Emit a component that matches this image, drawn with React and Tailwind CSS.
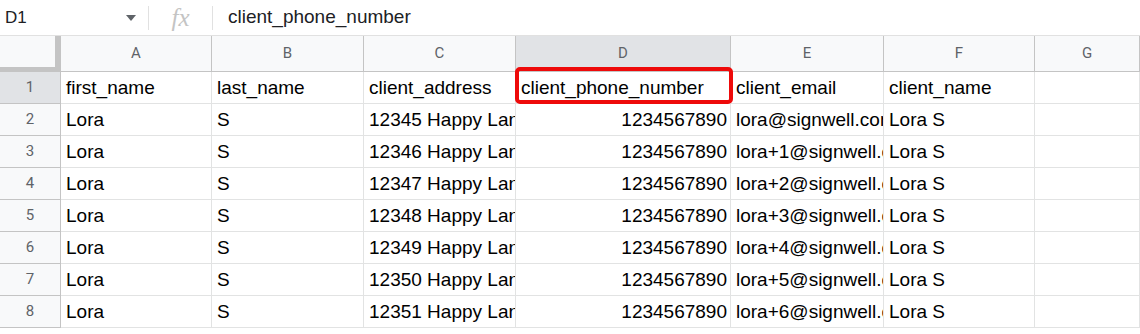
import React from 'react'

const cols = ['A', 'B', 'C', 'D', 'E', 'F', 'G']

const header = ['first_name', 'last_name', 'client_address', 'client_phone_number', 'client_email', 'client_name', '']

const rows = [0, 1, 2, 3, 4, 5, 6].map((i) => [
  'Lora',
  'S',
  `${12345 + i} Happy Lane`,
  '1234567890',
  i === 0 ? 'lora@signwell.com' : `lora+${i}@signwell.com`,
  'Lora S',
  '',
])

const gridCols = 'grid grid-cols-[61px_151px_152px_152px_215px_153px_151px_1fr]'

function FormulaBar() {
  return (
    <div className="flex h-[36px] items-center border-b border-[#e1e1e1] bg-white">
      <div className="flex w-[148px] items-center justify-between pl-[5px] pr-[12px]">
        <span className="text-[17px] text-[#202124]">D1</span>
        <svg width="10" height="6" viewBox="0 0 10 6" className="mt-[1px]">
          <path d="M0 0h10L5 6z" fill="#5f6368" />
        </svg>
      </div>
      <div className="h-[24px] w-px bg-[#e1e1e1]" />
      <div className="flex w-[63px] items-center justify-center">
        <span className="font-['Liberation_Serif',serif] text-[25px] italic leading-none text-[#c4c4c4]">fx</span>
      </div>
      <div className="h-[24px] w-px bg-[#e1e1e1]" />
      <span className="pl-[15px] text-[19px] text-[#202124]">client_phone_number</span>
    </div>
  )
}

export default function App() {
  return (
    <div className="h-[334px] w-[1140px] overflow-hidden bg-white font-['Liberation_Sans',Arial,sans-serif]">
      <FormulaBar />

      <div className={`${gridCols} h-[36px]`}>
        <div className="relative border-b-[5px] border-r-[6px] border-[#c4c4c4] bg-[#f8f9fa]" />
        {cols.map((c) => (
          <div
            key={c}
            className={`flex items-center justify-center border-b border-r border-[#c4c4c4] text-[15px] font-['Roboto',sans-serif] text-[#5f6368] ${
              c === 'D' ? 'bg-[#e1e3e6]' : 'bg-[#f8f9fa]'
            }`}
          >
            {c}
          </div>
        ))}
      </div>

      <div className={`${gridCols}`}>
        {[header, ...rows].map((row, r) => (
          <React.Fragment key={r}>
            <div
              className={`flex h-[32px] items-center justify-center border-b border-r border-[#c4c4c4] text-[15px] font-['Roboto',sans-serif] text-[#5f6368] ${
                r === 0 ? 'bg-[#e1e3e6]' : 'bg-[#f8f9fa]'
              }`}
            >
              {r + 1}
            </div>
            {row.map((v, c) => (
              <div
                key={c}
                className={`relative flex h-[32px] items-center whitespace-nowrap border-b border-r border-[#e2e3e3] pt-[2px] text-[19px] text-[#000] ${
                  r > 0 && c === 3 ? 'justify-end pr-[3px]' : 'pl-[5px]'
                } ${r === 0 && c === 3 ? '' : 'overflow-hidden'}`}
              >
                {v}
                {r === 0 && c === 3 && (
                  <div className="pointer-events-none absolute -top-[5px] -left-[1px] -right-[3px] -bottom-[1px] rounded-[5px] border-[4px] border-[#ee0a0a]" />
                )}
              </div>
            ))}
          </React.Fragment>
        ))}
      </div>
    </div>
  )
}
